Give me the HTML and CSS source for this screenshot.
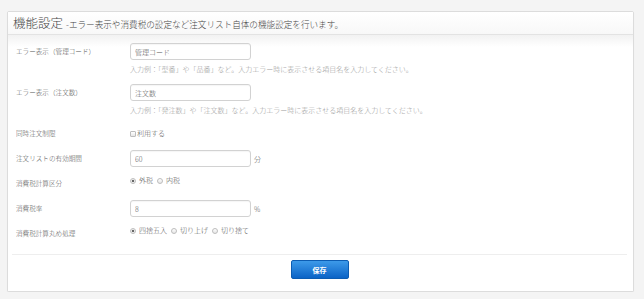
FILE: index.html
```html
<!DOCTYPE html>
<html lang="ja">
<head>
    <meta charset="UTF-8">
    <meta name="viewport" content="width=device-width, initial-scale=1.0">
    <title>機能設定</title>
    <link rel="stylesheet" href="styles.css">
</head>
<body>
    <div class="panel">
        <div class="panel-head">
            <h2>機能設定</h2>
            <span class="lead">-エラー表示や消費税の設定など注文リスト自体の機能設定を行います。</span>
        </div>
        <form class="panel-body">
            <div class="row">
                <label class="row-label" for="err_code">エラー表示（管理コード）</label>
                <div class="field">
                    <input type="text" id="err_code" value="管理コード">
                    <p class="help">入力例：「型番」や「品番」など。入力エラー時に表示させる項目名を入力してください。</p>
                </div>
            </div>
            <div class="row">
                <label class="row-label" for="err_qty">エラー表示（注文数）</label>
                <div class="field">
                    <input type="text" id="err_qty" value="注文数">
                    <p class="help">入力例：「発注数」や「注文数」など。入力エラー時に表示させる項目名を入力してください。</p>
                </div>
            </div>
            <div class="row">
                <span class="row-label">同時注文制限</span>
                <div class="field">
                    <label class="check"><input type="checkbox">利用する</label>
                </div>
            </div>
            <div class="row">
                <label class="row-label" for="expire">注文リストの有効期間</label>
                <div class="field inline">
                    <input type="text" id="expire" value="60">
                    <span class="unit">分</span>
                </div>
            </div>
            <div class="row">
                <span class="row-label">消費税計算区分</span>
                <div class="field options">
                    <label class="opt"><input type="radio" name="taxtype" checked>外税</label>
                    <label class="opt"><input type="radio" name="taxtype">内税</label>
                </div>
            </div>
            <div class="row">
                <label class="row-label" for="taxrate">消費税率</label>
                <div class="field inline">
                    <input type="text" id="taxrate" value="8">
                    <span class="unit">%</span>
                </div>
            </div>
            <div class="row">
                <span class="row-label">消費税計算丸め処理</span>
                <div class="field options">
                    <label class="opt"><input type="radio" name="round" checked>四捨五入</label>
                    <label class="opt"><input type="radio" name="round">切り上げ</label>
                    <label class="opt"><input type="radio" name="round">切り捨て</label>
                </div>
            </div>
            <div class="actions">
                <button type="submit">保存</button>
            </div>
        </form>
    </div>
</body>
</html>
```

FILE: styles.css
```css
body {
    font-family: "Noto Sans CJK JP", "Noto Sans", sans-serif;
    font-weight: 300;
    margin: 0;
    padding: 11px 10px 0 7px;
    background-color: #f4f4f4;
    color: #555;
}

.panel {
    background-color: #fff;
    border: 1px solid #dcdcdc;
    border-radius: 2px;
    box-shadow: 0 1px 1px rgba(0, 0, 0, 0.06);
}

.panel-head {
    display: flex;
    align-items: baseline;
    height: 22px;
    padding: 0 5px;
    background: linear-gradient(#ffffff, #f8f8f8);
    border-bottom: 1px solid #e3e3e3;
}

.panel-head h2 {
    margin: 0;
    font-size: 12.5px;
    line-height: 22px;
    font-weight: 300;
    color: #444;
}

.lead {
    margin-left: 3px;
    font-size: 8.6px;
    color: #444;
}

.panel-body {
    display: flex;
    flex-direction: column;
    gap: 8px;
    padding: 8px 6px 12px 4px;
    background: linear-gradient(#f2f2f2, #ffffff 12px);
}

.row {
    display: flex;
    align-items: flex-start;
    padding-left: 4px;
}

.row-label {
    width: 114px;
    flex-shrink: 0;
    font-size: 6.6px;
    line-height: 17px;
    color: #555;
}

.field {
    display: flex;
    flex-direction: column;
}

.field.inline {
    flex-direction: row;
    align-items: center;
    gap: 3px;
}

input[type="text"] {
    box-sizing: border-box;
    width: 121px;
    height: 17px;
    margin: 0;
    padding: 0 4px;
    border: 1px solid #d2d2d2;
    border-radius: 3px;
    font-family: inherit;
    font-weight: 300;
    font-size: 7px;
    color: #555;
    box-shadow: inset 0 1px 1px rgba(0, 0, 0, 0.04);
}

.help {
    margin: 3px 0 0;
    font-size: 7px;
    line-height: 13px;
    color: #9a9a9a;
}

.unit {
    font-size: 7px;
    color: #555;
}

.check,
.opt {
    display: flex;
    align-items: center;
    font-size: 7px;
    line-height: 17px;
    color: #555;
}

.options {
    flex-direction: row;
    gap: 4px;
    margin-top: -3px;
}

.opt input,
.check input {
    appearance: none;
    -webkit-appearance: none;
    margin: 0 3px 0 0;
    width: 6px;
    height: 6px;
    border: 1px solid #bdbdbd;
    background: linear-gradient(#ffffff, #e6e6e6);
}

.opt input {
    border-radius: 50%;
    box-sizing: border-box;
}

.opt input:checked {
    background: radial-gradient(circle, #666 0 1.3px, #f4f4f4 1.6px);
}

.check input {
    box-sizing: border-box;
    border-radius: 1px;
    margin-right: 1px;
}

.actions {
    display: flex;
    justify-content: center;
    margin-top: 4px;
    padding-top: 5px;
    border-top: 1px solid #eeeeee;
}

button {
    width: 58px;
    height: 19px;
    border: 1px solid #0c5cb2;
    border-radius: 2px;
    background: linear-gradient(#3d9ae9, #0b63c6);
    color: #fff;
    font-family: inherit;
    font-size: 7px;
    font-weight: bold;
    cursor: pointer;
}
```
